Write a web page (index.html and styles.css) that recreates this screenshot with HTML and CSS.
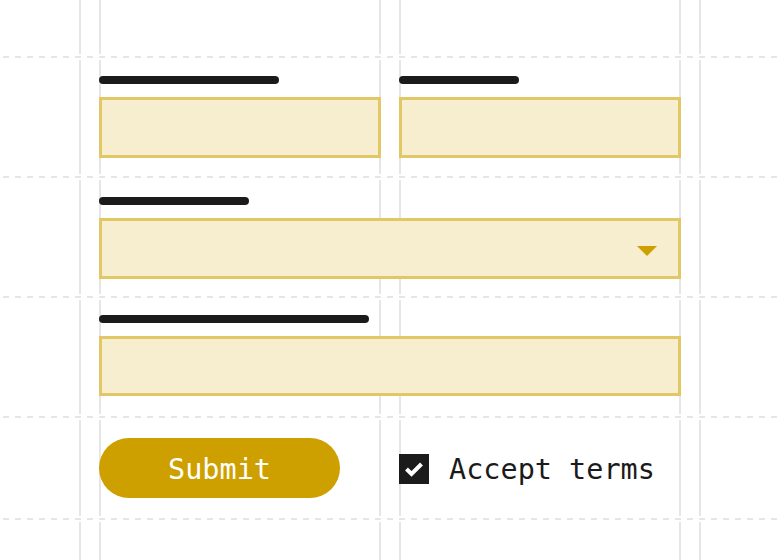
FILE: index.html
```html
<!DOCTYPE html>
<html lang="en">
<head>
<meta charset="utf-8">
<title>Form wireframe</title>
<link rel="stylesheet" href="styles.css">
</head>
<body>
<div class="page">
  <div class="row row-top"></div>
  <div class="rule"></div>
  <div class="row row-1 cols">
    <div class="group">
      <div class="label-bar w180"></div>
      <div class="field"></div>
    </div>
    <div class="group">
      <div class="label-bar w120"></div>
      <div class="field"></div>
    </div>
  </div>
  <div class="rule"></div>
  <div class="row row-2">
    <div class="group wide">
      <div class="label-bar w150"></div>
      <div class="field select"><span class="caret"></span></div>
    </div>
  </div>
  <div class="rule"></div>
  <div class="row row-3">
    <div class="group wide">
      <div class="label-bar w270"></div>
      <div class="field field-3"></div>
    </div>
  </div>
  <div class="rule"></div>
  <div class="row row-4 cols">
    <div class="cell">
      <button class="submit" type="button">Submit</button>
    </div>
    <div class="cell check">
      <svg class="checkbox" width="30" height="30" viewBox="0 0 30 30" aria-hidden="true">
        <rect width="30" height="30" fill="#1b1b1b"/>
        <path d="M7.5 15 L12.5 20 L22.5 10" fill="none" stroke="#ffffff" stroke-width="4"/>
      </svg>
      <span class="check-label">Accept terms</span>
    </div>
  </div>
  <div class="rule"></div>
  <div class="row row-bottom"></div>
</div>
</body>
</html>
```

FILE: styles.css
```css
* { box-sizing: border-box; }

html, body {
  margin: 0;
  padding: 0;
  background: #ffffff;
}

.page {
  width: 780px;
  height: 560px;
  overflow: hidden;
  background-color: #ffffff;
  background-image:
    linear-gradient(#e6e6e6, #e6e6e6),
    linear-gradient(#e6e6e6, #e6e6e6),
    linear-gradient(#e6e6e6, #e6e6e6),
    linear-gradient(#e6e6e6, #e6e6e6),
    linear-gradient(#e6e6e6, #e6e6e6),
    linear-gradient(#e6e6e6, #e6e6e6);
  background-size: 2px 100%;
  background-repeat: no-repeat;
  background-position: 79px 0, 99px 0, 379px 0, 399px 0, 679px 0, 699px 0;
  font-family: "DejaVu Sans Mono", "Liberation Mono", monospace;
}

.rule {
  height: 6px;
  border-top: 2px solid #ffffff;
  border-bottom: 2px solid #ffffff;
  background-image: repeating-linear-gradient(90deg, #e6e6e6 0 6px, #ffffff 6px 12px);
  background-position: 3px 0;
}

.row {
  padding-left: 99px;
}

.row-top { height: 54px; }
.row-1 { height: 114px; padding-top: 16px; }
.row-2 { height: 114px; padding-top: 17px; }
.row-3 { height: 114px; padding-top: 15px; }
.row-4 { height: 96px; padding-top: 18px; }
.row-bottom { height: 40px; }

.cols {
  display: grid;
  grid-template-columns: 282px 282px;
  column-gap: 18px;
  align-items: start;
}

.group {
  display: flex;
  flex-direction: column;
  gap: 13px;
}

.group.wide { width: 582px; }

.label-bar {
  height: 8px;
  border-radius: 4px;
  background: #1b1b1b;
}

.w120 { width: 120px; }
.w150 { width: 150px; }
.w180 { width: 180px; }
.w270 { width: 270px; }

.field {
  height: 61px;
  border: 3px solid #e2c766;
  background: #f6eecf;
}

.field-3 { height: 60px; }

.select {
  display: flex;
  justify-content: flex-end;
  align-items: center;
  padding-right: 21px;
}

.caret {
  width: 0;
  height: 0;
  margin-top: 5px;
  border-left: 10px solid transparent;
  border-right: 10px solid transparent;
  border-top: 10px solid #cda000;
}

.cell {
  display: flex;
  align-items: center;
  height: 60px;
}

.submit {
  width: 241px;
  height: 60px;
  border: 0;
  border-radius: 30px;
  background: #cda000;
  color: #ffffff;
  font-family: "DejaVu Sans Mono", "Liberation Mono", monospace;
  font-size: 28.5px;
  padding: 2px 0 0;
  cursor: pointer;
}

.check {
  gap: 20px;
  padding-top: 2px;
}

.checkbox {
  display: block;
  flex: none;
}

.check-label {
  font-size: 28.5px;
  color: #1b1b1b;
  line-height: 1;
  padding-top: 2px;
}
```
